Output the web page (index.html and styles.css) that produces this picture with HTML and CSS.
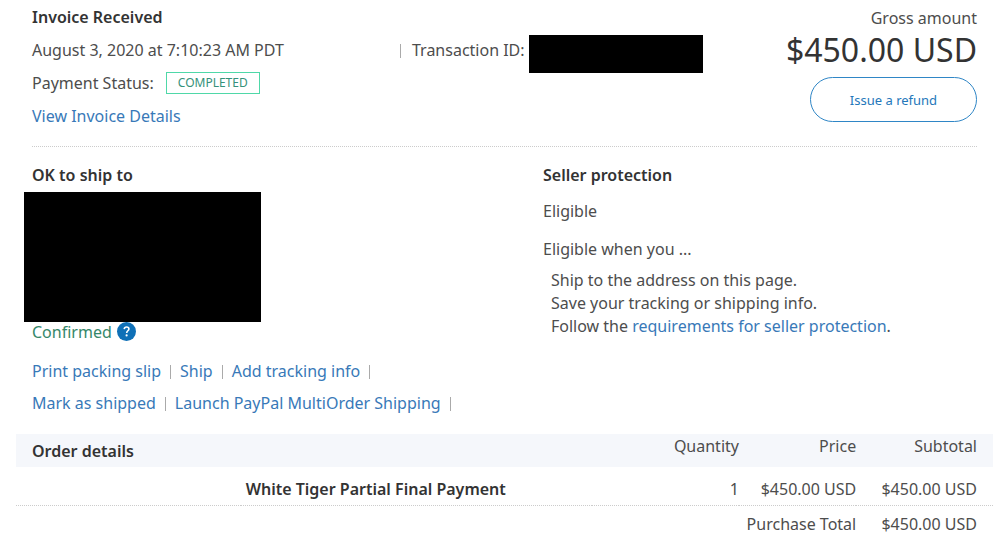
FILE: index.html
```
<!DOCTYPE html>
<html lang="en">
<head>
    <meta charset="UTF-8">
    <title>Transaction details</title>
    <link rel="stylesheet" href="styles.css">
</head>
<body>

<div class="page">
    <div class="summary">
        <div class="summary-info">
            <h2>Invoice Received</h2>
            <div class="summary-row">
                <span class="summary-date">August 3, 2020 at 7:10:23 AM PDT</span>
                <span class="summary-id">Transaction ID: 7</span>
                <span class="hidden-id"></span>
            </div>
            <div class="summary-row">
                <span>Payment Status:</span>
                <span class="status">COMPLETED</span>
            </div>
            <div class="summary-row"><a href="#">View Invoice Details</a></div>
        </div>
        <div class="summary-amount">
            <span>Gross amount</span>
            <span class="amount">$450.00 USD</span>
            <button class="refund" type="button">Issue a refund</button>
        </div>
    </div>

    <div class="details">
        <div class="shipping">
            <h2>OK to ship to</h2>
            <div class="hidden-address"></div>
            <div class="confirmed">
                <span>Confirmed</span>
                <svg class="help" viewBox="0 0 19 19" aria-hidden="true">
                    <circle cx="9.5" cy="9.5" r="9.5" fill="#0f70b7"/>
                    <path d="M7.2 7.1c.2-1.4 1.1-2.1 2.4-2.1 1.4 0 2.3.8 2.3 2 0 1.8-2.2 1.8-2.2 4" fill="none" stroke="#fff" stroke-width="1.6"/>
                    <circle cx="9.6" cy="13.4" r="1.1" fill="#fff"/>
                </svg>
            </div>
            <ul class="actions">
                <li><a href="#">Print packing slip</a></li>
                <li><a href="#">Ship</a></li>
                <li><a href="#">Add tracking info</a></li>
                <li><a href="#">Mark as shipped</a></li>
                <li><a href="#">Launch PayPal MultiOrder Shipping</a></li>
            </ul>
        </div>
        <div class="protection">
            <h2>Seller protection</h2>
            <p>Eligible</p>
            <p>Eligible when you ...</p>
            <ul class="rules">
                <li>Ship to the address on this page.</li>
                <li>Save your tracking or shipping info.</li>
                <li>Follow the <a href="#">requirements for seller protection</a>.</li>
            </ul>
        </div>
    </div>

    <table class="order">
        <thead>
            <tr>
                <th class="order-title">Order details</th>
                <th class="order-name"></th>
                <th class="order-quantity">Quantity</th>
                <th class="order-price">Price</th>
                <th class="order-subtotal">Subtotal</th>
            </tr>
        </thead>
        <tbody>
            <tr class="item">
                <td></td>
                <td class="order-name">White Tiger Partial Final Payment</td>
                <td>1</td>
                <td>$450.00 USD</td>
                <td>$450.00 USD</td>
            </tr>
            <tr class="total">
                <td colspan="4">Purchase Total</td>
                <td>$450.00 USD</td>
            </tr>
        </tbody>
    </table>
</div>

</body>
</html>
```
FILE: styles.css
```
* {
    margin: 0;
    padding: 0;
    list-style: none;
    box-sizing: border-box;
}

body {
    background-color: #fff;
    color: #4d4d4d;
    font-family: "Noto Sans", "Open Sans", sans-serif;
    font-size: 16px;
    line-height: 24px;
}

a {
    color: #3879b8;
    text-decoration: none;
}

h2 {
    color: #333;
    font-size: 16px;
    font-weight: 600;
    line-height: 23px;
}

.page {
    padding: 6px 7px 0 16px;
}

/* top part */
.summary {
    display: flex;
    justify-content: space-between;
    margin: 0 16px;
    padding-bottom: 18px;
    border-bottom: 1px dotted #ccc;
}

.summary-info {
    display: flex;
    flex-direction: column;
    gap: 9px;
}

.summary-row {
    display: flex;
    align-items: center;
    height: 24px;
}

.summary-date {
    width: 368px;
}

.summary-id {
    padding-left: 10px;
}

.summary-id::before,
.actions li::after {
    content: "";
    display: inline-block;
    width: 1px;
    height: 14px;
    background-color: #aaa;
}

.summary-id::before {
    margin-right: 11px;
    margin-left: -10px;
    vertical-align: -2px;
}

.hidden-id {
    width: 174px;
    height: 38px;
    margin-top: 8px;
    margin-left: -9px;
    background-color: #000;
}

.status {
    margin-left: 12px;
    padding: 0 11px;
    border: 1px solid #4fd8a8;
    color: #35917a;
    font-size: 12px;
    line-height: 20px;
}

.summary-amount {
    display: flex;
    flex-direction: column;
    align-items: flex-end;
}

.amount {
    color: #333;
    font-size: 32px;
    line-height: 40px;
}

.refund {
    width: 167px;
    height: 45px;
    margin-top: 7px;
    border: 1px solid #2f86c6;
    border-radius: 23px;
    background-color: #fff;
    color: #2477ba;
    font-family: inherit;
    font-size: 13px;
}

/* address and protection */
.details {
    display: grid;
    grid-template-columns: 511fr 434fr;
    margin: 17px 16px 0;
}

.hidden-address {
    width: 237px;
    height: 130px;
    margin: 5px 0 0 -8px;
    background-color: #000;
}

.confirmed {
    display: flex;
    gap: 5px;
    color: #35876a;
    line-height: 20px;
}

.help {
    width: 19px;
    height: 19px;
}

.actions {
    display: flex;
    flex-wrap: wrap;
    max-width: 450px;
    margin-top: 17px;
    row-gap: 8px;
}

.actions li::after {
    margin: 0 9px;
    vertical-align: -2px;
}

.protection p {
    margin-top: 12px;
}

.protection p + p {
    margin-top: 14px;
}

.rules {
    margin: 8px 0 0 8px;
    line-height: 23px;
}

/* order table */
.order {
    width: 100%;
    margin-top: 19px;
    border-collapse: collapse;
    table-layout: fixed;
}

.order th,
.order td {
    font-weight: 400;
    text-align: right;
    vertical-align: top;
}

.order thead {
    background-color: #f5f7fb;
}

.order th {
    height: 33px;
}

.order .order-title {
    width: 23%;
    padding: 5px 0 0 16px;
    color: #333;
    font-weight: 600;
    text-align: left;
}

.order .order-name {
    width: 36%;
    padding-left: 5px;
    color: #333;
    font-weight: 600;
    text-align: left;
}

.order-quantity {
    width: 15%;
}

.order-price {
    width: 12%;
}

.order th:last-child,
.order td:last-child {
    padding-right: 16px;
}

.item td {
    padding: 10px 0 4px;
    border-bottom: 1px dotted #ccc;
}

.total td {
    padding-top: 6px;
}
```
